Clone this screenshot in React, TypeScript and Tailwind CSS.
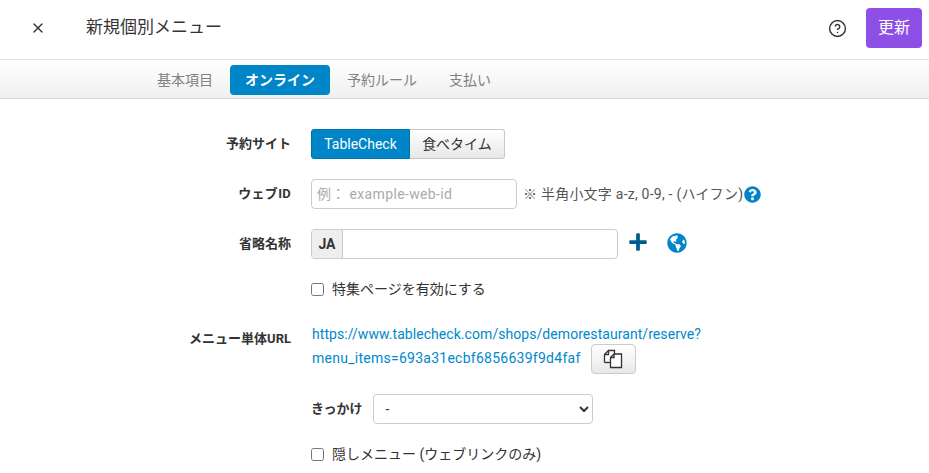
import { X, CircleHelp } from "lucide-react";
import { FaPlus, FaGlobeAmericas, FaQuestionCircle } from "react-icons/fa";

const tabs = [
  { name: "基本項目", active: false, extra: "" },
  { name: "オンライン", active: true, extra: "" },
  { name: "予約ルール", active: false, extra: "mr-[15px]" },
  { name: "支払い", active: false, extra: "" },
];

const font = "font-['Roboto','Noto_Sans_CJK_JP',sans-serif]";

function Row({
  label,
  labelClass = "",
  className,
  children,
}: {
  label?: string;
  labelClass?: string;
  className: string;
  children: React.ReactNode;
}) {
  return (
    <div className={`flex ${className}`}>
      <div className={`w-[291px] shrink-0 text-right text-[13px] font-bold text-[#333] ${labelClass}`}>{label}</div>
      <div className="ml-5 flex min-w-0 flex-1 items-center">{children}</div>
    </div>
  );
}

function CopyIcon() {
  return (
    <svg width="20" height="20" viewBox="0 0 20 20" fill="none" stroke="#333" strokeWidth="1.3">
      <path d="M1.5 13.5V5.5L5.5 1.5H11.5V5" fill="#fff" />
      <path d="M5.5 1.5V5.5H1.5" />
      <path d="M7.5 18.5V8.5L11 5H18.5V18.5Z" fill="#fff" />
      <path d="M11 5V8.5H7.5" />
      <path d="M1.5 13.5H7.5" />
    </svg>
  );
}

export default function App() {
  return (
    <div className={`h-screen w-full overflow-hidden bg-white ${font} text-[#333]`}>
      <header className="flex h-[60px] items-center border-b border-[#e2e2e2] pb-[3px] pl-[30px] pr-[7px]">
        <X className="h-4 w-4 text-[#333]" strokeWidth={2} />
        <h1 className="ml-10 text-[17px] text-[#333]">新規個別メニュー</h1>
        <div className="ml-auto flex items-center gap-[19px]">
          <CircleHelp className="h-[19px] w-[19px] text-[#333]" strokeWidth={1.8} />
          <button className="h-10 w-14 rounded bg-[#8e4fe6] text-base text-white">更新</button>
        </div>
      </header>

      <nav className="flex h-[39px] items-start gap-[17px] border-b border-[#d9d9d9] bg-gradient-to-b from-white to-[#f0f0f0] pl-[157px] pt-[5px]">
        {tabs.map((tab) =>
          tab.active ? (
            <span key={tab.name} className="flex h-[30px] w-[100px] items-center justify-center rounded bg-[#0085c8] text-sm font-bold text-white">
              {tab.name}
            </span>
          ) : (
            <span key={tab.name} className={`flex h-[30px] items-center text-sm text-[#808080] ${tab.extra}`}>
              {tab.name}
            </span>
          )
        )}
      </nav>

      <main className="pt-[30px]">
        <Row label="予約サイト" className="h-[30px] items-center">
          <div className="flex h-[30px] text-sm">
            <span className="flex w-[99px] items-center justify-center rounded-l-[3px] border border-[#0070b0] bg-[#0085c8] text-white">TableCheck</span>
            <span className="flex w-[95px] items-center justify-center rounded-r-[3px] border border-l-0 border-[#c8c8c8] bg-gradient-to-b from-white to-[#e8e8e8]">食べタイム</span>
          </div>
        </Row>

        <Row label="ウェブID" labelClass="tracking-[0.3px]" className="mt-5 h-[30px] items-center">
          <input
            placeholder="例： example-web-id"
            className="h-[30px] w-[206px] rounded border border-[#ccc] px-[5px] text-sm tracking-[0.35px] placeholder:text-[#aaa]"
          />
          <span className="ml-[6px] text-sm tracking-[0.23px] text-[#555]">※ 半角小文字 a-z, 0-9, - (ハイフン)</span>
          <FaQuestionCircle className="ml-px h-[17px] w-[17px] text-[#0085c8]" />
        </Row>

        <Row label="省略名称" className="mt-5 h-[30px] items-center">
          <div className="flex h-[30px] w-[307px] rounded border border-[#ccc]">
            <span className="flex w-[31px] items-center justify-center rounded-l-[3px] border-r border-[#ccc] bg-[#eee] text-sm font-bold">JA</span>
            <input className="min-w-0 flex-1 rounded-r" />
          </div>
          <FaPlus className="mb-[5px] ml-[10px] h-5 w-5 text-[#005b8c]" />
          <FaGlobeAmericas className="mb-[3px] ml-[19px] h-5 w-5 text-[#0085c8]" />
        </Row>

        <Row className="mt-5 h-5 items-center">
          <label className="flex items-center text-sm">
            <input type="checkbox" className="h-[13px] w-[13px]" />
            <span className="ml-2">特集ページを有効にする</span>
          </label>
        </Row>

        <Row label="メニュー単体URL" labelClass="pt-1" className="mt-[26px] items-start">
          <div className="ml-px text-sm leading-[19px] text-[#0088cc]">
            <div className="tracking-[0.06px]">https://www.tablecheck.com/shops/demorestaurant/reserve?</div>
            <div className="flex items-center">
              <span className="-mt-[2px] tracking-[0.26px]">menu_items=693a31ecbf6856639f9d4faf</span>
              <button className="ml-[10px] flex h-[30px] w-[45px] items-center justify-center rounded border border-[#ccc] bg-gradient-to-b from-white to-[#e8e8e8]">
                <CopyIcon />
              </button>
            </div>
          </div>
        </Row>

        <Row className="mt-5 h-[30px] items-center">
          <span className="text-[13px] font-bold">きっかけ</span>
          <select className="ml-[11px] h-[30px] w-[220px] rounded border border-[#ccc] bg-white px-[7px] text-sm">
            <option>-</option>
          </select>
        </Row>

        <Row className="mt-5 h-5 items-center">
          <label className="flex items-center text-sm">
            <input type="checkbox" className="h-[13px] w-[13px]" />
            <span className="ml-2">隠しメニュー (ウェブリンクのみ)</span>
          </label>
        </Row>
      </main>
    </div>
  );
}
